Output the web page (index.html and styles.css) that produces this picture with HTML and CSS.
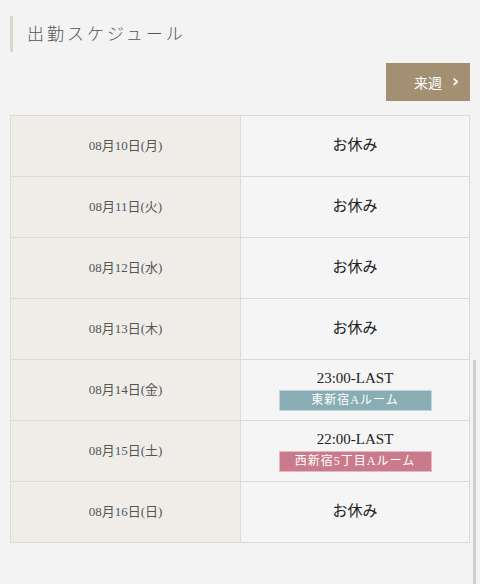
FILE: index.html
```html
<!DOCTYPE html>
<html lang="ja">
<head>
  <meta charset="UTF-8" />
  <meta name="viewport" content="width=device-width, initial-scale=1" />
  <title>出勤スケジュール</title>
  <link rel="stylesheet" href="styles.css">
</head>
<body>

  <div class="page">
    <h2 class="title">出勤スケジュール</h2>

    <div class="nav">
      <a class="btn" href="#">来週 <span class="arrow">&#8250;</span></a>
    </div>

    <table class="schedule">
      <tr>
        <td class="date">08月10日(月)</td>
        <td class="shift"><span class="off">お休み</span></td>
      </tr>
      <tr>
        <td class="date">08月11日(火)</td>
        <td class="shift"><span class="off">お休み</span></td>
      </tr>
      <tr>
        <td class="date">08月12日(水)</td>
        <td class="shift"><span class="off">お休み</span></td>
      </tr>
      <tr>
        <td class="date">08月13日(木)</td>
        <td class="shift"><span class="off">お休み</span></td>
      </tr>
      <tr>
        <td class="date">08月14日(金)</td>
        <td class="shift">
          <div class="time">23:00-LAST</div>
          <div class="room room-east">東新宿Aルーム</div>
        </td>
      </tr>
      <tr>
        <td class="date">08月15日(土)</td>
        <td class="shift">
          <div class="time">22:00-LAST</div>
          <div class="room room-west">西新宿5丁目Aルーム</div>
        </td>
      </tr>
      <tr>
        <td class="date">08月16日(日)</td>
        <td class="shift"><span class="off">お休み</span></td>
      </tr>
    </table>
  </div>

  <div class="scrollbar"></div>

</body>
</html>
```

FILE: styles.css
```css
* {
  margin: 0;
  padding: 0;
  box-sizing: border-box;
}

body {
  background-color: #f3f3f3;
  color: #333;
  font-family: 'Liberation Serif', 'Noto Sans CJK JP', serif;
  overflow: hidden;
}

.page {
  padding: 16px 10px 0;
}

.title {
  border-left: 3px solid #ddd8c2;
  height: 36px;
  padding-left: 14px;
  font-family: 'Noto Sans CJK JP', sans-serif;
  font-weight: 300;
  font-size: 17px;
  line-height: 33px;
  letter-spacing: 3px;
  color: #555;
}

.nav {
  display: flex;
  justify-content: flex-end;
  margin-top: 11px;
}

.btn {
  display: flex;
  align-items: center;
  justify-content: flex-end;
  gap: 10px;
  width: 84px;
  height: 38px;
  padding-right: 11px;
  background-color: #a39072;
  color: #fff;
  text-decoration: none;
  font-size: 14px;
}

.arrow {
  font-family: 'DejaVu Sans', sans-serif;
  font-size: 17px;
  font-weight: bold;
  line-height: 1;
  margin-top: -2px;
}

.schedule {
  width: 460px;
  margin-top: 14px;
  border-collapse: collapse;
}

.schedule td {
  border: 1px solid #dddad5;
  height: 61px;
  text-align: center;
  vertical-align: middle;
  line-height: 16px;
}

.date {
  width: 230px;
  background-color: #f0ede9;
  color: #555;
  font-size: 13px;
}

.shift {
  background-color: #f5f5f5;
}

.off {
  display: block;
  font-family: 'Noto Sans CJK JP', sans-serif;
  font-size: 15px;
  line-height: 16px;
  margin-top: -4px;
  color: #222;
}

.time {
  font-size: 15px;
  line-height: 17px;
  color: #222;
}

.room {
  width: 153px;
  height: 21px;
  margin: 3px auto 0;
  border: 1px solid;
  color: #fff;
  font-size: 12px;
  line-height: 19px;
  letter-spacing: 1px;
}

.room-east {
  background-color: #89adb5;
  border-color: #c3d7db;
}

.room-west {
  background-color: #c97b8c;
  border-color: #e4b9c3;
}

.scrollbar {
  position: absolute;
  right: 4px;
  top: 360px;
  width: 3px;
  height: 224px;
  background-color: #cfcfcf;
}
```
